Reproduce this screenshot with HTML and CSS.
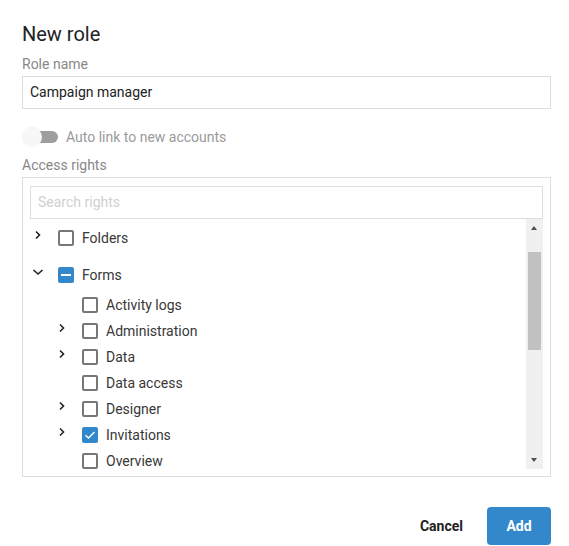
FILE: index.html
```html
<!DOCTYPE html>
<html>
<head>
<meta charset="utf-8">
<link rel="stylesheet" href="styles.css">
</head>
<body>
<div class="dialog">
  <h1 class="title">New role</h1>
  <div class="label label-first">Role name</div>
  <div class="field">Campaign manager</div>
  <div class="toggle-row">
    <span class="toggle"><span class="track"></span><span class="knob"></span></span>
    <span class="toggle-label">Auto link to new accounts</span>
  </div>
  <div class="label label-rights">Access rights</div>
  <div class="tree-box">
    <div class="search">Search rights</div>
    <div class="list-wrap">
      <div class="list">
        <div class="row lvl0 folders">
          <span class="chev"><svg width="12" height="12" viewBox="0 0 12 12"><polyline points="4,2.5 7.5,6 4,9.5" fill="none" stroke="#222" stroke-width="1.6"/></svg></span>
          <span class="cb"></span><span class="txt">Folders</span>
        </div>
        <div class="row lvl0 forms">
          <span class="chev"><svg width="12" height="12" viewBox="0 0 12 12"><polyline points="1.5,4 6,8 10.5,4" fill="none" stroke="#222" stroke-width="1.6"/></svg></span>
          <span class="cb cb-on"><span class="dash"></span></span><span class="txt">Forms</span>
        </div>
        <div class="row lvl1">
          <span class="chev"></span><span class="cb"></span><span class="txt">Activity logs</span>
        </div>
        <div class="row lvl1">
          <span class="chev"><svg width="12" height="12" viewBox="0 0 12 12"><polyline points="4,2.5 7.5,6 4,9.5" fill="none" stroke="#222" stroke-width="1.6"/></svg></span>
          <span class="cb"></span><span class="txt">Administration</span>
        </div>
        <div class="row lvl1">
          <span class="chev"><svg width="12" height="12" viewBox="0 0 12 12"><polyline points="4,2.5 7.5,6 4,9.5" fill="none" stroke="#222" stroke-width="1.6"/></svg></span>
          <span class="cb"></span><span class="txt">Data</span>
        </div>
        <div class="row lvl1">
          <span class="chev"></span><span class="cb"></span><span class="txt">Data access</span>
        </div>
        <div class="row lvl1">
          <span class="chev"><svg width="12" height="12" viewBox="0 0 12 12"><polyline points="4,2.5 7.5,6 4,9.5" fill="none" stroke="#222" stroke-width="1.6"/></svg></span>
          <span class="cb"></span><span class="txt">Designer</span>
        </div>
        <div class="row lvl1">
          <span class="chev"><svg width="12" height="12" viewBox="0 0 12 12"><polyline points="4,2.5 7.5,6 4,9.5" fill="none" stroke="#222" stroke-width="1.6"/></svg></span>
          <span class="cb cb-on"><svg width="16" height="16" viewBox="0 0 16 16"><polyline points="3.5,8.2 6.5,11 12.5,5" fill="none" stroke="#fff" stroke-width="1.4"/></svg></span><span class="txt">Invitations</span>
        </div>
        <div class="row lvl1">
          <span class="chev"></span><span class="cb"></span><span class="txt">Overview</span>
        </div>
      </div>
      <div class="scrollbar">
        <span class="arrow arrow-up"></span>
        <span class="thumb"></span>
        <span class="arrow arrow-down"></span>
      </div>
    </div>
  </div>
  <div class="actions">
    <button class="btn btn-cancel">Cancel</button>
    <button class="btn btn-add">Add</button>
  </div>
</div>
</body>
</html>
```
FILE: styles.css
```css
html, body {
  margin: 0;
  padding: 0;
  background: #fff;
}
body {
  font-family: Roboto, "Liberation Sans", sans-serif;
  color: #222;
}
.dialog {
  padding: 22px 18px 0 22px;
}
.title {
  margin: 0;
  font-size: 20px;
  line-height: 24px;
  font-weight: 400;
  color: #222;
}
.label {
  font-size: 14px;
  line-height: 16px;
  color: #888;
}
.label-first {
  margin-top: 10px;
}
.label-rights {
  margin-top: 10px;
}
.field {
  margin-top: 4px;
  height: 33px;
  box-sizing: border-box;
  border: 1px solid #ddd;
  padding: 0 7px;
  font-size: 14px;
  line-height: 31px;
  color: #222;
}
.toggle-row {
  margin-top: 18px;
  height: 20px;
  display: flex;
  align-items: center;
  gap: 8px;
}
.toggle {
  position: relative;
  width: 36px;
  height: 20px;
  flex: none;
}
.track {
  position: absolute;
  left: 4px;
  top: 4px;
  width: 32px;
  height: 12px;
  border-radius: 6px;
  background: #9e9e9e;
}
.knob {
  position: absolute;
  left: 0;
  top: 0;
  width: 20px;
  height: 20px;
  border-radius: 50%;
  background: #f7f7f7;
  box-shadow: 0 0 1px rgba(0,0,0,0.08);
}
.toggle-label {
  font-size: 14px;
  line-height: 16px;
  color: #9a9a9a;
}
.tree-box {
  margin-top: 4px;
  height: 300px;
  box-sizing: border-box;
  border: 1px solid #ddd;
  padding: 8px 7px 7px 7px;
  display: flex;
  flex-direction: column;
}
.search {
  height: 33px;
  box-sizing: border-box;
  border: 1px solid #ddd;
  padding: 0 7px;
  font-size: 14px;
  line-height: 31px;
  color: #d0d0d0;
  flex: none;
}
.list-wrap {
  flex: 1;
  display: flex;
  min-height: 0;
}
.list {
  flex: 1;
  overflow: hidden;
  padding-top: 6px;
}
.row {
  height: 26px;
  display: flex;
  align-items: center;
  font-size: 14px;
  color: #383838;
}
.folders {
  margin-bottom: 11px;
}
.forms {
  margin-bottom: 4px;
}
.lvl0 {
  padding-left: 2px;
}
.lvl1 {
  padding-left: 26px;
}
.chev {
  width: 12px;
  height: 12px;
  margin-top: -6px;
  margin-right: 14px;
  flex: none;
  display: flex;
}
.cb {
  width: 16px;
  height: 16px;
  box-sizing: border-box;
  border: 2px solid #777;
  border-radius: 2px;
  flex: none;
  margin-right: 8px;
  display: flex;
  align-items: center;
  justify-content: center;
  position: relative;
}
.cb-on {
  background: #3388cc;
  border-color: #3388cc;
}
.cb-on svg {
  position: absolute;
  left: -2px;
  top: -2px;
}
.dash {
  width: 10px;
  height: 2px;
  background: #fff;
}
.txt {
  line-height: 16px;
}
.scrollbar {
  width: 17px;
  flex: none;
  background: #f0f0f0;
  position: relative;
}
.thumb {
  position: absolute;
  left: 2px;
  top: 33px;
  width: 13px;
  height: 98px;
  background: #c1c1c1;
}
.arrow {
  position: absolute;
  left: 5px;
  width: 0;
  height: 0;
  border-left: 3.5px solid transparent;
  border-right: 3.5px solid transparent;
}
.arrow-up {
  top: 7px;
  border-bottom: 4px solid #505050;
}
.arrow-down {
  bottom: 7px;
  border-top: 4px solid #505050;
}
.actions {
  margin-top: 30px;
  display: flex;
  justify-content: flex-end;
  gap: 8px;
}
.btn {
  height: 38px;
  min-width: 64px;
  padding: 0 16px;
  border: none;
  border-radius: 4px;
  font-family: Roboto, "Liberation Sans", sans-serif;
  font-size: 14px;
  font-weight: 700;
  cursor: pointer;
}
.btn-cancel {
  background: transparent;
  color: #222;
}
.btn-add {
  background: #3388cc;
  color: #fff;
}
```
